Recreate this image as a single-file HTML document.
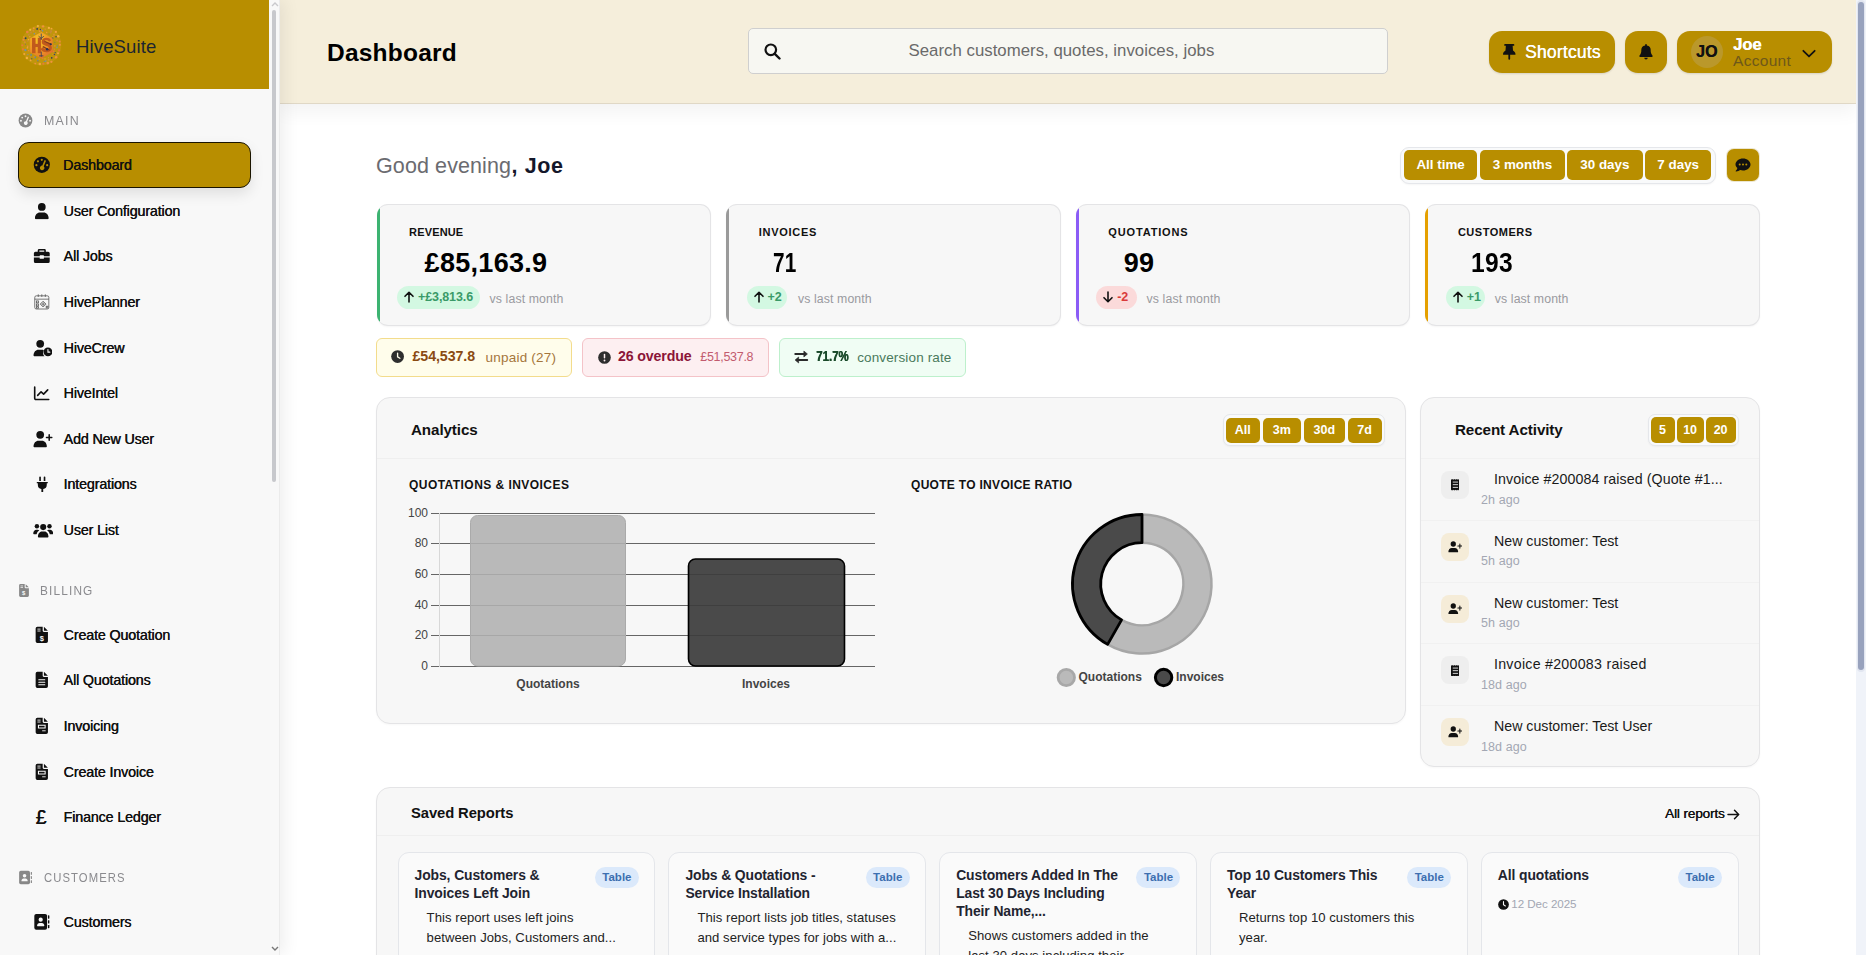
<!DOCTYPE html>
<html lang="en"><head><meta charset="utf-8"><title>Dashboard</title>
<style>
*{box-sizing:border-box;margin:0;padding:0}
html,body{width:1866px;height:955px;overflow:hidden;background:#fff;font-family:"Liberation Sans",sans-serif;color:#111}
.abs{position:absolute}
/* sidebar */
#side{position:absolute;left:0;top:0;width:280px;height:955px;background:#f8f8f8;border-right:1px solid #ebebeb;box-shadow:4px 0 16px rgba(0,0,0,.07)}
#brand{position:absolute;left:0;top:0;width:269px;height:89px;background:#b88e00}
#brand .nm{position:absolute;left:76px;top:35px;font-size:18.5px;line-height:24px;color:#1c2530;letter-spacing:.15px}
.sec{position:absolute;left:18px;height:16px;font-size:13px;line-height:16px;color:#8a8a8e;letter-spacing:1.25px}
.sec svg{position:absolute;left:0;top:0}
.sec span{position:absolute;top:1px}
.mi{position:absolute;left:18px;width:233px;height:46px;font-size:14.3px;line-height:46px;color:#111;font-weight:bold}
.mi span{position:absolute;left:45.5px;top:0;white-space:nowrap;letter-spacing:-.15px;font-weight:normal;text-shadow:.35px 0 0 #111}
.mi svg{position:absolute;left:15.2px;top:14.2px;width:17.6px;height:17.6px}
.mi.act{background:#b88e00;border:1.5px solid #1a1400;border-radius:11px;box-shadow:0 6px 14px rgba(0,0,0,.10)}
.mi.act svg{left:13.7px;top:12.7px}
.mi.act span{left:44px;top:-1.5px}
#sscroll{position:absolute;left:270px;top:0;width:9px;height:955px;background:#f8f8f8}
#sscroll i{position:absolute;left:2.2px;top:10px;width:3.8px;height:471.5px;border-radius:2px;background:#c7c8cc}
/* header */
#hdr{position:absolute;left:280px;top:0;width:1576px;height:104px;background:#f5eedb;border-bottom:1px solid #e0d8c6;box-shadow:0 8px 18px rgba(0,0,0,.05)}
#hdr h1{position:absolute;left:47px;top:35.5px;font-size:24.5px;line-height:34px;font-weight:bold;color:#000;letter-spacing:.22px}
#search{position:absolute;left:468px;top:28px;width:640px;height:46px;background:#f7f7f2;border:1px solid #cfcfcf;border-radius:5px}
#search span{position:absolute;left:159.5px;top:0;white-space:nowrap;font-size:16.8px;line-height:43.5px;color:#6a6a6a;letter-spacing:.02px}
.gb{position:absolute;top:31px;height:42px;background:#b88e00;border-radius:13px;box-shadow:0 1px 2px rgba(0,0,0,.12)}

/* header buttons */
#hdr .gb{top:31px}
.gb .t{position:absolute;white-space:nowrap}
/* main */
#main{position:absolute;left:280px;top:104px;width:1576px;height:851px;background:#fff;overflow:hidden}
#greet{position:absolute;left:96px;top:47px;font-size:21.5px;line-height:30px;color:#6b6b70;white-space:nowrap;letter-spacing:.1px}
#greet b{color:#14172a;font-weight:bold;letter-spacing:.6px;margin-left:.5px}
.grp{position:absolute;border:1px solid #e5e7eb;border-radius:9px;background:#f9fafb;box-shadow:0 1px 2px rgba(0,0,0,.04)}
.grp a{position:absolute;top:2px;background:#b88e00;color:#fff;font-weight:bold;text-align:center;border-radius:5px;white-space:nowrap}
/* stats */
.stat{position:absolute;top:100px;width:334.6px;height:122px;background:#f7f7f7;border:1px solid #e4e4e6;border-left:0;border-radius:11px;overflow:hidden;box-shadow:0 1px 2px rgba(0,0,0,.04)}

.stat:before{content:"";position:absolute;left:0;top:0;bottom:0;width:3px;background:var(--c)}
.stat .l{position:absolute;left:32.5px;top:19px;font-size:11px;line-height:16px;font-weight:bold;letter-spacing:.15px;color:#111}
.stat .v{position:absolute;left:48px;top:38px;font-size:27px;line-height:40px;font-weight:bold;color:#000;letter-spacing:.3px}
.stat .p{position:absolute;left:20.4px;top:81px;height:23px;border-radius:12px;font-size:12.5px;line-height:23px;font-weight:bold;padding:0 0 0 21px;white-space:nowrap;letter-spacing:-.1px;overflow:hidden}
.stat .p svg{position:absolute;left:7px;top:5px}
.stat .p.up{background:#d3f8e2;color:#3a9a68}
.stat .p.dn{background:#fbdada;color:#d93a3a}
.stat .m{position:absolute;top:85px;font-size:12.3px;line-height:18px;color:#9a9aa0;white-space:nowrap;letter-spacing:.1px}
/* alerts */
.al{position:absolute;top:234px;height:39px;border:1px solid;border-radius:6px;font-size:13.5px;line-height:35px;white-space:nowrap}
.al svg{position:absolute;left:14px;top:11px}
.al b{position:absolute;top:0;font-weight:bold;font-size:14.2px}
.al span{position:absolute;top:1px}
/* cards */
.card{position:absolute;background:#f7f7f7;border:1px solid #e4e4e6;border-radius:14px;box-shadow:0 1px 2px rgba(0,0,0,.03)}
.card .hd{position:absolute;left:0;right:0;top:0;height:61px;border-bottom:1px solid #efefef}
.card h2{position:absolute;top:22px;font-size:15.2px;line-height:20px;font-weight:bold;color:#111;letter-spacing:-.1px;white-space:nowrap}
.sub{position:absolute;font-size:12px;line-height:16px;font-weight:bold;letter-spacing:.3px;color:#111;white-space:nowrap}

.ax{font-family:"Liberation Sans",sans-serif;font-size:12px;fill:#444}
.ra{position:absolute;left:0;right:0;height:62px;border-top:1px solid #f1f1f1}
.ra .ic{position:absolute;left:20px;top:12px;width:28px;height:28px;border-radius:8px}
.ra .ic svg{position:absolute}
.ra .tx{position:absolute;left:73px;top:10px;font-size:14.2px;line-height:20px;color:#1a1a1a;white-space:nowrap;letter-spacing:0}
.ra .tm{position:absolute;left:60px;top:32.5px;font-size:12.5px;line-height:16px;color:#a3a7b3;white-space:nowrap;letter-spacing:.1px}
.rep{position:absolute;top:64px;width:257.8px;height:200px;background:#fafafa;border:1px solid #e4e6ea;border-radius:11px}
.rep h3{position:absolute;left:16px;top:13.7px;width:180px;font-size:13.9px;line-height:17.9px;font-weight:bold;color:#1f2430;letter-spacing:-.1px;white-space:nowrap}
.rep .tag{position:absolute;left:196.3px;top:14px;width:44px;height:21px;border-radius:11px;background:#dbe9fb;color:#3d6fb0;font-size:11.5px;line-height:21px;font-weight:bold;text-align:center}
.rep p{position:absolute;left:28px;width:215px;font-size:13.1px;line-height:20px;color:#222;white-space:nowrap;letter-spacing:.05px}
/* page scrollbar */
#pscroll{position:absolute;left:1856px;top:0;width:10px;height:955px;background:#f0f3f9}
#pscroll i{position:absolute;left:1px;top:0;width:8px;height:672px;border-radius:5px;background:#e2e6f0}
#pscroll b{position:absolute;left:2px;top:2px;width:6px;height:668px;border-radius:3px;background:#98a2bd}
</style></head><body>

<svg width="0" height="0" style="position:absolute">
<defs>
<symbol id="i-gauge" viewBox="0 0 20 20"><circle cx="10" cy="10" r="9.2" fill="currentColor"/><g fill="var(--bg)"><circle cx="10" cy="4.3" r="1.25"/><circle cx="5.6" cy="6.1" r="1.25"/><circle cx="3.9" cy="10.4" r="1.25"/><circle cx="16.1" cy="10.4" r="1.25"/><path d="M13.2 4.6l1.6.7-2.6 6.3a2.6 2.6 0 1 1-1.6-.7z"/></g></symbol>
<symbol id="i-user" viewBox="0 0 20 20"><circle cx="10" cy="5.6" r="4.4" fill="currentColor"/><path d="M2.2 18.6c0-4 2.6-6.6 5.6-6.6h4.4c3 0 5.6 2.600 5.600 6.600q0 .9-.9.900H3.100q-.9 0-.9-.9z" fill="currentColor"/></symbol>
<symbol id="i-brief" viewBox="0 0 20 20"><path fill="currentColor" d="M7 2.200h6a1.600 1.600 0 0 1 1.600 1.600V5.400h2.600A1.800 1.800 0 0 1 19 7.200v3.300H12.400v-.6a.6.6 0 0 0-.6-.6H8.200a.6.6 0 0 0-.6.6v.6H1V7.200A1.800 1.800 0 0 1 2.800 5.400H5.400V3.800A1.600 1.600 0 0 1 7 2.200zm.2 3.200h5.600V4H7.200zM1 11.900h6.600v.8a.6.600 0 0 0 .6.600h3.600a.6.600 0 0 0 .6-.6v-.8H19v4.500a1.800 1.800 0 0 1-1.800 1.800H2.800A1.800 1.800 0 0 1 1 16.400z"/></symbol>
<symbol id="i-plan" viewBox="0 0 20 20"><g fill="none" stroke="#555" stroke-width=".9"><rect x="2" y="3.200" width="16" height="15" rx="1.800"/><path d="M2 7h16M6 1.500v3M14 1.500v3M10 1.500v3"/><rect x="4" y="9" width="2.200" height="2.200"/><rect x="4" y="12.500" width="2.200" height="2.200"/><rect x="4" y="15.600" width="2.200" height="1.600"/><path d="M11.500 9.300l3.300 3.300-3.300 3.300-3.300-3.300zM11.500 10.500v4.200M9.400 12.600h4.200"/><rect x="15" y="15" width="2" height="2"/></g></symbol>
<symbol id="i-uclock" viewBox="0 0 22 20"><circle cx="8" cy="5.300" r="4.300" fill="currentColor"/><path fill="currentColor" d="M.6 18.400c0-3.900 2.500-6.500 5.400-6.500h4c.7 0 1.400.2 2 .5a6 6 0 0 0 .8 6.900H1.500q-.9 0-.9-.9z"/><circle cx="16.600" cy="14.400" r="4.900" fill="currentColor"/><path d="M16.600 11.700v2.900h2.100" fill="none" stroke="var(--bg)" stroke-width="1.200" stroke-linecap="round"/></symbol>
<symbol id="i-chart" viewBox="0 0 20 20"><path d="M2 2.500v13.200a1.300 1.300 0 0 0 1.300 1.300H18.500" fill="none" stroke="currentColor" stroke-width="1.900" stroke-linecap="round"/><path d="M5.500 12.200l4-4.200 3 2.700 4.800-5" fill="none" stroke="currentColor" stroke-width="1.900" stroke-linecap="round" stroke-linejoin="round"/></symbol>
<symbol id="i-uplus" viewBox="0 0 22 20"><circle cx="8" cy="5.300" r="4.300" fill="currentColor"/><path fill="currentColor" d="M.6 18.400c0-3.900 2.500-6.500 5.400-6.500h4c2.900 0 5.400 2.600 5.400 6.500q0 .9-.9.900H1.500q-.9 0-.9-.9z"/><path d="M18 5.300v6M15 8.300h6" stroke="currentColor" stroke-width="1.700" stroke-linecap="round"/></symbol>
<symbol id="i-plug" viewBox="0 0 20 20"><path fill="currentColor" d="M6.300 1.600a1 1 0 0 1 2 0V6h-2zM11.700 1.600a1 1 0 0 1 2 0V6h-2zM4 7.200h12a.8.800 0 0 1 0 1.600h-.6v1.700a5.400 5.400 0 0 1-4.300 5.300v3a1.100 1.100 0 0 1-2.200 0v-3a5.400 5.400 0 0 1-4.300-5.300V8.800H4a.8.800 0 0 1 0-1.600z"/></symbol>
<symbol id="i-users" viewBox="0 0 24 20"><circle cx="12" cy="6" r="3.600" fill="currentColor"/><circle cx="4.600" cy="5" r="2.600" fill="currentColor"/><circle cx="19.400" cy="5" r="2.600" fill="currentColor"/><path fill="currentColor" d="M5.800 17.400c0-3.400 2-6.200 4.600-6.200h3.200c2.600 0 4.600 2.800 4.600 6.200q0 .9-.9.900H6.700q-.9 0-.9-.9zM.3 13.600c0-2.600 1.500-4.600 3.500-4.600h1.800c.7 0 1.300.2 1.800.6a7 7 0 0 0-3.200 4.900H1.100q-.8 0-.8-.9zM23.700 13.600c0-2.600-1.500-4.600-3.500-4.600h-1.800c-.7 0-1.300.2-1.800.6a7 7 0 0 1 3.200 4.900h3.100q.8 0 .8-.9z"/></symbol>
<symbol id="i-fdollar" viewBox="0 0 20 20"><path fill="currentColor" d="M5 .8h6v4.700a1.300 1.300 0 0 0 1.300 1.300H17v10.400a2 2 0 0 1-2 2H5a2 2 0 0 1-2-2V2.800a2 2 0 0 1 2-2zM12.400.9L16.900 5.500H12.400z"/><g fill="var(--bg)"><rect x="5" y="3" width="3.600" height="1"/><rect x="5" y="5.200" width="3.600" height="1"/></g><text x="10" y="17" font-family="Liberation Sans" font-size="8.500" font-weight="bold" text-anchor="middle" fill="var(--bg)">$</text></symbol>
<symbol id="i-flines" viewBox="0 0 20 20"><path fill="currentColor" d="M5 .8h6v4.700a1.300 1.300 0 0 0 1.300 1.300H17v10.400a2 2 0 0 1-2 2H5a2 2 0 0 1-2-2V2.800a2 2 0 0 1 2-2zM12.400.9L16.900 5.500H12.400z"/><g fill="var(--bg)"><rect x="6" y="9.400" width="8" height="1.200" rx=".6"/><rect x="6" y="12.200" width="8" height="1.200" rx=".6"/><rect x="6" y="15" width="8" height="1.200" rx=".6"/></g></symbol>
<symbol id="i-finv" viewBox="0 0 20 20"><path fill="currentColor" d="M5 .8h6v4.700a1.300 1.300 0 0 0 1.300 1.300H17v10.400a2 2 0 0 1-2 2H5a2 2 0 0 1-2-2V2.800a2 2 0 0 1 2-2zM12.400.9L16.900 5.500H12.400z"/><g fill="var(--bg)"><rect x="5" y="3" width="3.600" height="1"/><rect x="5" y="5.200" width="3.600" height="1"/><path d="M5.600 8.800h8.800v4.400H5.600zm1.200 1.200v2h6.400v-2z"/><rect x="10.400" y="15.200" width="4" height="1"/></g></symbol>
<symbol id="i-abook" viewBox="0 0 20 20"><rect x="1.500" y="1" width="14.500" height="18" rx="2.200" fill="currentColor"/><g fill="currentColor"><rect x="17" y="2.600" width="1.600" height="3.800" rx=".5"/><rect x="17" y="8.100" width="1.600" height="3.800" rx=".5"/><rect x="17" y="13.600" width="1.600" height="3.800" rx=".5"/></g><g fill="var(--bg)"><circle cx="8.750" cy="7.600" r="2.400"/><path d="M4.600 14.600c0-1.900 1.300-3.200 2.900-3.200H10c1.600 0 2.900 1.300 2.900 3.200q0 .5-.5.500H5.100q-.5 0-.5-.5z"/></g></symbol>
</defs></svg>
<div id="main">
<div id="greet">Good evening<b>, Joe</b></div>
<div class="grp" style="left:1120px;top:42.500px;width:315.500px;height:37px">
<a style="left:3.200px;width:72.800px;height:30px;top:2.500px;font-size:13.400px;line-height:30px">All time</a>
<a style="left:79.300px;width:84.400px;height:30px;top:2.500px;font-size:13.400px;line-height:30px">3 months</a>
<a style="left:166px;width:75.700px;height:30px;top:2.500px;font-size:13.400px;line-height:30px">30 days</a>
<a style="left:244px;width:66.400px;height:30px;top:2.500px;font-size:13.400px;line-height:30px">7 days</a>
</div>
<div class="abs" style="left:1447px;top:45px;width:32px;height:32px;border-radius:7px;background:#b88e00;box-shadow:0 0 0 1px #ece6d0"><svg style="position:absolute;left:8px;top:9px" width="16" height="14" viewBox="0 0 16 14"><path fill="#111" d="M8 .5c4.100 0 7.500 2.700 7.500 6s-3.400 6-7.500 6c-1 0-2-.2-2.900-.5-.9.700-2.300 1.500-4 1.500a.4.400 0 0 1-.3-.7c.8-.8 1.400-1.800 1.600-2.800C1.200 9 .5 7.800.5 6.500c0-3.300 3.400-6 7.500-6z"/><g fill="#b88e00"><circle cx="4.700" cy="6.500" r="1"/><circle cx="8" cy="6.500" r="1"/><circle cx="11.300" cy="6.500" r="1"/></g></svg></div>
<div class="stat" style="left:96.6px;--c:#3cb371"><div class="l" style="letter-spacing:.15px">REVENUE</div><div class="v" style="">£85,163.9</div><div class="p up" style="width:82.6px"><svg width="10" height="12" viewBox="0 0 10 12"><path d="M5 11V1.500M1 5.300l4-4 4 4" fill="none" stroke="#111" stroke-width="1.600" stroke-linecap="round" stroke-linejoin="round"/></svg>+£3,813.6</div><div class="m" style="left:113.0px">vs last month</div></div>
<div class="stat" style="left:446.2px;--c:#9a9a9a"><div class="l" style="letter-spacing:.72px">INVOICES</div><div class="v" style="transform:scaleX(.77);transform-origin:0 50%;margin-left:-1.500px">71</div><div class="p up" style="width:40.6px"><svg width="10" height="12" viewBox="0 0 10 12"><path d="M5 11V1.500M1 5.300l4-4 4 4" fill="none" stroke="#111" stroke-width="1.600" stroke-linecap="round" stroke-linejoin="round"/></svg>+2</div><div class="m" style="left:71.8px">vs last month</div></div>
<div class="stat" style="left:795.8px;--c:#8b5cf6"><div class="l" style="letter-spacing:.85px">QUOTATIONS</div><div class="v" style="">99</div><div class="p dn" style="width:40.8px"><svg width="10" height="12" viewBox="0 0 10 12"><path d="M5 1v9.500M1 6.700l4 4 4-4" fill="none" stroke="#111" stroke-width="1.600" stroke-linecap="round" stroke-linejoin="round"/></svg>-2</div><div class="m" style="left:70.8px">vs last month</div></div>
<div class="stat" style="left:1145.4px;--c:#e5a000"><div class="l" style="letter-spacing:.52px">CUSTOMERS</div><div class="v" style="transform:scaleX(.91);transform-origin:0 50%;margin-left:-2.300px">193</div><div class="p up" style="width:38.8px"><svg width="10" height="12" viewBox="0 0 10 12"><path d="M5 11V1.500M1 5.300l4-4 4 4" fill="none" stroke="#111" stroke-width="1.600" stroke-linecap="round" stroke-linejoin="round"/></svg>+1</div><div class="m" style="left:69.4px">vs last month</div></div>

<div class="al" style="left:96px;width:196px;background:#fffdeb;border-color:#f3dc8c"><svg width="13.200" height="13.200" viewBox="0 0 14 14" style="left:14.300px;top:11.300px"><circle cx="7" cy="7" r="6.800" fill="#2e2e2e"/><path d="M7 3.300v4l2.400 1.500" fill="none" stroke="#fffdeb" stroke-width="1.400" stroke-linecap="round"/></svg><b style="left:35.500px;color:#8a4a12;letter-spacing:-.07px">£54,537.8</b><span style="left:108.500px;color:#a5763c;letter-spacing:.22px">unpaid (27)</span></div>
<div class="al" style="left:302px;width:187px;background:#fdeff1;border-color:#f4c3c8"><svg width="13" height="13" viewBox="0 0 14 14" style="left:14.500px;top:11.500px"><circle cx="7" cy="7" r="6.800" fill="#2e2e2e"/><rect x="6.200" y="3" width="1.600" height="5" rx=".8" fill="#fdeff1"/><circle cx="7" cy="10.200" r="1" fill="#fdeff1"/></svg><b style="left:35px;color:#8b1538;letter-spacing:-.14px">26 overdue</b><span style="left:117.300px;color:#c25b6e;font-size:12.500px;letter-spacing:-.3px">£51,537.8</span></div>
<div class="al" style="left:499px;width:187px;background:#f0fdf4;border-color:#bdf0cc"><svg width="14.500" height="14" viewBox="0 0 14 14"><path d="M1 4h10M13 10H3" fill="none" stroke="#2a2a2a" stroke-width="1.900" stroke-linecap="round"/><path d="M9.600 1v6l3.600-3zM4.400 7v6L.8 10z" fill="#2a2a2a" stroke="#2a2a2a" stroke-width=".6" stroke-linejoin="round"/></svg><b style="left:35.500px;color:#1a4a2a;transform:scaleX(.81);transform-origin:0 50%;text-shadow:.5px 0 0 #1a4a2a">71.7%</b><span style="left:77.200px;color:#4a7a5c;letter-spacing:.13px">conversion rate</span></div>

<div class="card" style="left:96px;top:293px;width:1030px;height:327px">
<div class="hd"></div><h2 style="left:34px">Analytics</h2>
<div class="grp" style="left:845.600px;top:16px;width:162px;height:32px;border-radius:7px">
<a style="left:2px;width:34.500px;height:25px;top:2.500px;font-size:12.500px;line-height:25px">All</a>
<a style="left:39px;width:38.500px;height:25px;top:2.500px;font-size:12.500px;line-height:25px">3m</a>
<a style="left:80px;width:41.500px;height:25px;top:2.500px;font-size:12.500px;line-height:25px">30d</a>
<a style="left:124px;width:34px;height:25px;top:2.500px;font-size:12.500px;line-height:25px">7d</a>
</div>
<div class="sub" style="left:32px;top:79px;letter-spacing:.45px">QUOTATIONS &amp; INVOICES</div>
<div class="sub" style="left:534px;top:79px">QUOTE TO INVOICE RATIO</div>
<svg class="abs" style="left:24px;top:100px" width="490" height="200" viewBox="0 0 490 200">
<g stroke="#666" stroke-width="1" shape-rendering="crispEdges">
<line x1="30" x2="474" y1="15.500" y2="15.500"/><line x1="30" x2="474" y1="45.500" y2="45.500"/><line x1="30" x2="474" y1="76.500" y2="76.500"/><line x1="30" x2="474" y1="107.500" y2="107.500"/><line x1="30" x2="474" y1="137.500" y2="137.500"/><line x1="30" x2="474" y1="168.500" y2="168.500"/>
<line x1="38.500" x2="38.500" y1="15" y2="169" stroke="#d8d8d8"/>
</g>
<rect x="69.500" y="17.500" width="155" height="150.500" rx="7" fill="rgba(176,176,176,.88)" stroke="#aaa" stroke-width="1"/>
<rect x="287.500" y="61" width="156" height="107" rx="7" fill="rgba(60,60,60,.93)" stroke="#000" stroke-width="1.600"/>
<g class="ax" text-anchor="end"><text x="27" y="19">100</text><text x="27" y="49.400">80</text><text x="27" y="80">60</text><text x="27" y="111">40</text><text x="27" y="141">20</text><text x="27" y="172">0</text></g>
<g class="ax" text-anchor="middle" font-weight="bold"><text x="147" y="190">Quotations</text><text x="365" y="190">Invoices</text></g>
</svg>
<svg class="abs" style="left:679px;top:100px" width="172" height="172" viewBox="0 0 172 172">
<path d="M86 16.5A69.5 69.5 0 1 1 51.62 146.40L65.57 121.89A41.3 41.3 0 1 0 86 44.7Z" fill="#bababa" stroke="#a6a6a6" stroke-width="2.500" stroke-linejoin="round"/>
<path d="M51.62 146.40A69.5 69.5 0 0 1 86 16.5L86 44.7A41.3 41.3 0 0 0 65.57 121.89Z" fill="#4a4a4a" stroke="#000" stroke-width="2.800" stroke-linejoin="round"/>
</svg>
<svg class="abs" style="left:669px;top:265.500px" width="200" height="26" viewBox="0 0 200 26">
<circle cx="20.300" cy="13.500" r="8.200" fill="#bababa" stroke="#a8a8a8" stroke-width="2.800"/>
<circle cx="117.600" cy="13.500" r="8.200" fill="#4a4a4a" stroke="#000" stroke-width="3"/>
<g class="ax" font-weight="bold"><text x="32.500" y="17">Quotations</text><text x="130" y="17">Invoices</text></g>
</svg>
</div>

<div class="card" style="left:1140px;top:293px;width:340px;height:370px;overflow:hidden">
<h2 style="left:34px">Recent Activity</h2>
<div class="grp" style="left:227.300px;top:15.500px;width:91px;height:32px;border-radius:7px">
<a style="left:1.300px;width:24px;height:26px;top:2px;font-size:12.500px;line-height:26px">5</a>
<a style="left:27.300px;width:27px;height:26px;top:2px;font-size:12.500px;line-height:26px">10</a>
<a style="left:56.300px;width:30px;height:26px;top:2px;font-size:12.500px;line-height:26px">20</a>
</div>
<div class="ra" style="top:60px"><div class="ic" style="background:#eeeeee"><svg style="left:9.600px;top:8.300px" width="8.800" height="11.400" viewBox="0 0 10 13" preserveAspectRatio="none"><path fill="#111" d="M0 0l1 .8 1-.8 1 .8 1-.8 1 .8 1-.8 1 .8 1-.8 1 .8 1-.8v13l-1-.8-1 .8-1-.8-1 .8-1-.8-1 .8-1-.8-1 .8-1-.8-1 .8z"/><g fill="#eeeeee"><rect x="2" y="3" width="6" height="1"/><rect x="2" y="6" width="6" height="1"/><rect x="2" y="9" width="6" height="1"/></g></svg></div><div class="tx" style="letter-spacing:.09px">Invoice #200084 raised (Quote #1...</div><div class="tm">2h ago</div></div>
<div class="ra" style="top:121.75px"><div class="ic" style="background:#f5ecd8"><svg style="left:6.800px;top:8.300px" width="14.500" height="11.500" viewBox="0 0 22 17" preserveAspectRatio="none"><circle cx="8" cy="4.500" r="4" fill="#111"/><path fill="#111" d="M.6 15.800c0-3.400 2.300-5.600 5-5.600h4.800c2.700 0 5 2.200 5 5.600q0 .8-.8.800H1.400q-.8 0-.8-.8z"/><path d="M18 4.500v6M15 7.500h6" stroke="#111" stroke-width="1.600" stroke-linecap="round"/></svg></div><div class="tx">New customer: Test</div><div class="tm">5h ago</div></div>
<div class="ra" style="top:183.5px"><div class="ic" style="background:#f5ecd8"><svg style="left:6.800px;top:8.300px" width="14.500" height="11.500" viewBox="0 0 22 17" preserveAspectRatio="none"><circle cx="8" cy="4.500" r="4" fill="#111"/><path fill="#111" d="M.6 15.800c0-3.400 2.300-5.600 5-5.600h4.800c2.700 0 5 2.200 5 5.600q0 .8-.8.800H1.400q-.8 0-.8-.8z"/><path d="M18 4.500v6M15 7.500h6" stroke="#111" stroke-width="1.600" stroke-linecap="round"/></svg></div><div class="tx">New customer: Test</div><div class="tm">5h ago</div></div>
<div class="ra" style="top:245.25px"><div class="ic" style="background:#eeeeee"><svg style="left:9.600px;top:8.300px" width="8.800" height="11.400" viewBox="0 0 10 13" preserveAspectRatio="none"><path fill="#111" d="M0 0l1 .8 1-.8 1 .8 1-.8 1 .8 1-.8 1 .8 1-.8 1 .8 1-.8v13l-1-.8-1 .8-1-.8-1 .8-1-.8-1 .8-1-.8-1 .8-1-.8-1 .8z"/><g fill="#eeeeee"><rect x="2" y="3" width="6" height="1"/><rect x="2" y="6" width="6" height="1"/><rect x="2" y="9" width="6" height="1"/></g></svg></div><div class="tx" style="letter-spacing:.27px">Invoice #200083 raised</div><div class="tm">18d ago</div></div>
<div class="ra" style="top:307px"><div class="ic" style="background:#f5ecd8"><svg style="left:6.800px;top:8.300px" width="14.500" height="11.500" viewBox="0 0 22 17" preserveAspectRatio="none"><circle cx="8" cy="4.500" r="4" fill="#111"/><path fill="#111" d="M.6 15.800c0-3.400 2.300-5.600 5-5.600h4.800c2.700 0 5 2.200 5 5.600q0 .8-.8.800H1.400q-.8 0-.8-.8z"/><path d="M18 4.500v6M15 7.500h6" stroke="#111" stroke-width="1.600" stroke-linecap="round"/></svg></div><div class="tx">New customer: Test User</div><div class="tm">18d ago</div></div>
</div>

<div class="card" style="left:96px;top:683px;width:1384px;height:300px;overflow:hidden">
<div class="hd" style="height:48px"></div><h2 style="left:34px;top:15px;font-size:14.800px">Saved Reports</h2>
<div class="abs" style="left:1288px;top:17px;font-size:13.500px;line-height:18px;color:#111;white-space:nowrap;letter-spacing:-.1px;text-shadow:.3px 0 0 #111">All reports</div>
<svg class="abs" style="left:1350px;top:21px" width="13" height="11" viewBox="0 0 13 11"><path d="M1 5.500h10.500M7.500 1.300l4.200 4.200-4.200 4.200" fill="none" stroke="#111" stroke-width="1.500" stroke-linecap="round" stroke-linejoin="round"/></svg>
<div class="rep" style="left:20.6px"><h3>Jobs, Customers &amp;<br>Invoices Left Join</h3><div class="tag">Table</div><p style="top:55px">This report uses left joins</p><p style="top:75px">between Jobs, Customers and...</p></div>
<div class="rep" style="left:291.4px"><h3>Jobs &amp; Quotations -<br>Service Installation</h3><div class="tag">Table</div><p style="top:55px">This report lists job titles, statuses</p><p style="top:75px">and service types for jobs with a...</p></div>
<div class="rep" style="left:562.2px"><h3>Customers Added In The<br>Last 30 Days Including<br>Their Name,...</h3><div class="tag">Table</div><p style="top:73px">Shows customers added in the</p><p style="top:93px">last 30 days including their</p></div>
<div class="rep" style="left:833px"><h3>Top 10 Customers This<br>Year</h3><div class="tag">Table</div><p style="top:55px">Returns top 10 customers this</p><p style="top:75px">year.</p></div>
<div class="rep" style="left:1103.8px"><h3>All quotations</h3><div class="tag">Table</div><svg class="abs" style="left:16.500px;top:45.500px" width="11" height="11" viewBox="0 0 14 14"><circle cx="7" cy="7" r="6.800" fill="#111"/><path d="M7 3.300v4l2.400 1.500" fill="none" stroke="#fafafa" stroke-width="1.400" stroke-linecap="round"/></svg><div class="abs" style="left:29.500px;top:43px;font-size:11.600px;line-height:16px;color:#a3a7b3;white-space:nowrap;letter-spacing:-.05px">12 Dec 2025</div></div>
</div>
</div>
<div id="hdr">
<h1>Dashboard</h1>
<div id="search"><svg style="position:absolute;left:15px;top:14px" width="17" height="17" viewBox="0 0 17 17"><circle cx="6.800" cy="6.800" r="5.300" fill="none" stroke="#111" stroke-width="2.200"/><path d="M10.800 10.800l4.700 4.700" stroke="#111" stroke-width="2.400" stroke-linecap="round"/></svg><span>Search customers, quotes, invoices, jobs</span></div>

<div class="gb" style="left:1209px;width:126px;top:31px"><svg style="position:absolute;left:14px;top:12px" width="12.500" height="17" viewBox="0 0 14 18" preserveAspectRatio="none"><path fill="#111" d="M2.300 1h9.400a1 1 0 0 1 0 2h-.9l.4 5c1.500.8 2.500 2 2.800 3.600a.8.800 0 0 1-.8.900H8v4.300a1 1 0 0 1-2 0V12.500H.8a.8.800 0 0 1-.8-.9c.3-1.600 1.300-2.800 2.800-3.600l.4-5H2.300a1 1 0 0 1 0-2z"/></svg><span class="t" style="left:36px;top:10px;font-size:17.500px;line-height:22px;color:#fff;letter-spacing:.2px;text-shadow:.3px 0 0 #fff">Shortcuts</span></div>
<div class="gb" style="left:1345px;width:42px;top:31px"><svg style="position:absolute;left:14px;top:13px" width="14" height="16" viewBox="0 0 16 18" preserveAspectRatio="none"><path fill="#111" d="M8 0a1 1 0 0 1 1 1v.6A5.400 5.400 0 0 1 13.400 7v1c0 1.600.5 3.200 1.500 4.400l.5.600a.9.900 0 0 1-.7 1.500H1.300a.9.900 0 0 1-.7-1.500l.5-.6C2.100 11.200 2.600 9.600 2.600 8V7A5.400 5.400 0 0 1 7 1.600V1a1 1 0 0 1 1-1zM6 15.500h4a2 2 0 0 1-4 0z"/></svg></div>
<div class="gb" style="left:1397px;width:155px;top:31px"><i style="position:absolute;left:14px;top:5px;width:32px;height:32px;border-radius:50%;background:#ba982b"></i><span class="t" style="left:19px;top:11px;font-size:16px;line-height:20px;font-weight:bold;color:#111;letter-spacing:0;text-shadow:.3px 0 0 #111">JO</span><span class="t" style="left:56px;top:3px;font-size:16.500px;line-height:20px;font-weight:bold;color:#fff;text-shadow:.4px 0 0 #fff">Joe</span><span class="t" style="left:56px;top:21px;font-size:15.500px;line-height:18px;color:#6e581a;letter-spacing:.3px">Account</span><svg style="position:absolute;left:125px;top:17.500px" width="14" height="10" viewBox="0 0 16 11"><path d="M1.500 1.800L8 8.300l6.500-6.500" fill="none" stroke="#111" stroke-width="2" stroke-linecap="round" stroke-linejoin="round"/></svg></div>
</div>
<div id="side">
<div id="brand"><svg style="position:absolute;left:19px;top:23px" width="44.500" height="44.500" viewBox="0 0 42 42">
<defs><radialGradient id="lg" cx="38%" cy="30%" r="75%"><stop offset="0" stop-color="#f8c526"/><stop offset=".55" stop-color="#f09a24"/><stop offset="1" stop-color="#e26f2c"/></radialGradient>
<filter id="lb" x="-10%" y="-10%" width="120%" height="120%"><feGaussianBlur stdDeviation=".35"/></filter></defs>
<g filter="url(#lb)">
<circle cx="21" cy="21" r="19" fill="#c99a1a" opacity=".55"/>
<circle cx="38.61" cy="20.63" r="1.09" fill="#f0923e"/><circle cx="37.85" cy="25.85" r="1.06" fill="#e9783a"/><circle cx="36.78" cy="28.61" r="0.99" fill="#f3a53a"/><circle cx="35.04" cy="32.26" r="1.17" fill="#f0923e"/><circle cx="30.56" cy="36.58" r="1.06" fill="#f0923e"/><circle cx="27.21" cy="37.85" r="1.24" fill="#f0923e"/><circle cx="23.00" cy="38.47" r="0.99" fill="#e9783a"/><circle cx="19.66" cy="38.78" r="1.17" fill="#f3a53a"/><circle cx="15.36" cy="38.30" r="0.88" fill="#f0923e"/><circle cx="10.98" cy="35.34" r="0.83" fill="#f3a53a"/><circle cx="7.42" cy="33.04" r="1.15" fill="#f5b040"/><circle cx="4.95" cy="29.22" r="0.93" fill="#f3a53a"/><circle cx="3.68" cy="24.83" r="1.06" fill="#e9783a"/><circle cx="3.12" cy="21.01" r="1.00" fill="#e9783a"/><circle cx="4.22" cy="15.82" r="0.99" fill="#ee8440"/><circle cx="4.65" cy="13.27" r="0.82" fill="#f0923e"/><circle cx="7.77" cy="8.50" r="1.19" fill="#ee8440"/><circle cx="10.56" cy="6.47" r="1.02" fill="#f5b040"/><circle cx="13.94" cy="4.95" r="0.92" fill="#f0923e"/><circle cx="17.83" cy="2.89" r="1.09" fill="#f5b040"/><circle cx="22.70" cy="3.14" r="1.10" fill="#f0923e"/><circle cx="28.22" cy="4.62" r="1.07" fill="#f5b040"/><circle cx="30.68" cy="5.26" r="0.86" fill="#f3a53a"/><circle cx="34.83" cy="8.44" r="1.02" fill="#f3a53a"/><circle cx="37.04" cy="12.46" r="1.20" fill="#f5b040"/><circle cx="38.44" cy="17.50" r="0.99" fill="#ee8440"/><circle cx="36.20" cy="21.56" r="0.64" fill="#5b86ad"/><circle cx="35.81" cy="23.16" r="0.64" fill="#6f93b5"/><circle cx="34.17" cy="27.94" r="0.66" fill="#33466a"/><circle cx="33.43" cy="29.73" r="0.78" fill="#33466a"/><circle cx="30.88" cy="32.85" r="0.80" fill="#2c3c5e"/><circle cx="28.02" cy="34.63" r="0.90" fill="#d99030"/><circle cx="25.25" cy="35.90" r="0.71" fill="#6f93b5"/><circle cx="23.86" cy="36.35" r="0.57" fill="#5b86ad"/><circle cx="17.93" cy="35.99" r="0.59" fill="#8a7a4a"/><circle cx="17.75" cy="35.23" r="0.61" fill="#5b86ad"/><circle cx="12.03" cy="33.74" r="0.58" fill="#33466a"/><circle cx="10.82" cy="31.80" r="0.65" fill="#c98a3a"/><circle cx="8.39" cy="29.77" r="0.60" fill="#6f93b5"/><circle cx="6.43" cy="25.83" r="0.74" fill="#5b86ad"/><circle cx="5.82" cy="25.38" r="0.85" fill="#6f93b5"/><circle cx="6.17" cy="20.02" r="0.56" fill="#8a7a4a"/><circle cx="5.55" cy="18.16" r="0.92" fill="#d99030"/><circle cx="6.27" cy="14.34" r="0.90" fill="#2c3c5e"/><circle cx="9.17" cy="11.09" r="0.91" fill="#c98a3a"/><circle cx="11.30" cy="8.97" r="0.86" fill="#c98a3a"/><circle cx="13.58" cy="7.30" r="0.87" fill="#d99030"/><circle cx="17.17" cy="5.58" r="0.88" fill="#2c3c5e"/><circle cx="20.34" cy="6.09" r="0.75" fill="#2c3c5e"/><circle cx="21.15" cy="6.36" r="0.66" fill="#c98a3a"/><circle cx="24.90" cy="5.93" r="0.69" fill="#d99030"/><circle cx="30.28" cy="7.75" r="0.93" fill="#c98a3a"/><circle cx="29.92" cy="9.24" r="0.74" fill="#c98a3a"/><circle cx="33.06" cy="11.10" r="0.91" fill="#d99030"/><circle cx="34.94" cy="13.04" r="0.69" fill="#2c3c5e"/><circle cx="35.99" cy="16.49" r="0.91" fill="#d99030"/><circle cx="33.83" cy="21.54" r="0.81" fill="#d99030"/><circle cx="33.42" cy="24.84" r="0.78" fill="#e9783a"/><circle cx="32.71" cy="26.84" r="0.83" fill="#e9783a"/><circle cx="31.92" cy="29.42" r="0.51" fill="#ee8440"/><circle cx="27.78" cy="32.75" r="0.55" fill="#ee8440"/><circle cx="24.53" cy="33.92" r="0.62" fill="#f3a53a"/><circle cx="22.40" cy="33.55" r="0.78" fill="#e9783a"/><circle cx="19.01" cy="34.08" r="0.83" fill="#d99030"/><circle cx="15.30" cy="32.50" r="0.81" fill="#5b86ad"/><circle cx="14.18" cy="32.01" r="0.58" fill="#ee8440"/><circle cx="11.39" cy="30.13" r="0.79" fill="#5b86ad"/><circle cx="9.01" cy="26.09" r="0.66" fill="#ee8440"/><circle cx="7.99" cy="23.35" r="0.79" fill="#f3a53a"/><circle cx="8.25" cy="21.94" r="0.68" fill="#f0923e"/><circle cx="8.25" cy="17.10" r="0.77" fill="#c98a3a"/><circle cx="8.96" cy="15.66" r="0.75" fill="#f3a53a"/><circle cx="10.22" cy="13.02" r="0.69" fill="#f0923e"/><circle cx="14.38" cy="10.13" r="0.70" fill="#6f93b5"/><circle cx="15.79" cy="9.47" r="0.53" fill="#f0923e"/><circle cx="19.54" cy="7.57" r="0.82" fill="#f0923e"/><circle cx="22.18" cy="7.28" r="0.71" fill="#6f93b5"/><circle cx="26.13" cy="8.90" r="0.69" fill="#f0923e"/><circle cx="28.34" cy="10.40" r="0.68" fill="#8a7a4a"/><circle cx="31.96" cy="12.83" r="0.57" fill="#f0923e"/><circle cx="31.83" cy="14.27" r="0.65" fill="#33466a"/><circle cx="33.83" cy="18.30" r="0.57" fill="#8a7a4a"/>
<path d="M21 8.500l10.800 6.200v12.600L21 33.500 10.200 27.300V14.700z" fill="url(#lg)"/>
<g fill="#c25a1c"><rect x="12.300" y="14" width="3.300" height="14.500"/><rect x="17.700" y="14" width="3" height="14.500"/><rect x="12.300" y="19.700" width="8" height="3"/>
<path d="M30.300 16.200c-1-1.500-2.600-2.300-4.500-2.300-2.600 0-4.400 1.500-4.400 3.700 0 2 1.300 3 3.800 3.800l1.400.5c1.100.4 1.500.8 1.500 1.500 0 .9-.8 1.500-2.100 1.500-1.500 0-2.600-.7-3.400-2l-2.300 1.700c1.100 2 3.100 3.100 5.600 3.100 3 0 5.100-1.700 5.100-4.300 0-2.100-1.200-3.300-3.900-4.200l-1.300-.4c-1.100-.4-1.500-.7-1.500-1.300 0-.7.600-1.200 1.600-1.200 1.100 0 1.900.5 2.500 1.400z"/></g>
<path d="M21 10v6M18.500 12.500l2.500 2 2.500-2M21 27v5M19 31h4" stroke="#3a3f5a" stroke-width=".8" fill="none"/>
<path d="M24.500 17.500l5.500 2.500M23 22.500l5.500 3" stroke="#8a3a1a" stroke-width="1.300" stroke-linecap="round"/>
<circle cx="30" cy="20" r="1" fill="#2c3252"/><circle cx="26.500" cy="24.800" r="1.100" fill="#2c3252"/>
</g></svg><span class="nm">HiveSuite</span></div>
<div class="sec" style="top:112px;--bg:#f8f8f8"><svg width="15" height="15" style="color:#888;top:.5px"><use href="#i-gauge"/></svg><span style="left:26px;transform:scaleX(.955);transform-origin:0 50%">MAIN</span></div>
<div class="sec" style="top:582px;--bg:#f8f8f8"><svg width="14" height="15" style="color:#888;left:-1px;top:.5px"><use href="#i-fdollar"/></svg><span style="left:22.300px;transform:scaleX(.912);transform-origin:0 50%">BILLING</span></div>
<div class="sec" style="top:869px;--bg:#f8f8f8"><svg width="15" height="15" style="color:#888;top:.5px"><use href="#i-abook"/></svg><span style="left:26px;transform:scaleX(.868);transform-origin:0 50%">CUSTOMERS</span></div>
<div class="mi act" style="top:142px;--bg:#b88e00"><svg><use href="#i-gauge"/></svg><span>Dashboard</span></div>
<div class="mi " style="top:188px;--bg:#f8f8f8"><svg><use href="#i-user"/></svg><span>User Configuration</span></div>
<div class="mi " style="top:233px;--bg:#f8f8f8"><svg><use href="#i-brief"/></svg><span>All Jobs</span></div>
<div class="mi " style="top:279px;--bg:#f8f8f8"><svg><use href="#i-plan"/></svg><span>HivePlanner</span></div>
<div class="mi " style="top:325px;--bg:#f8f8f8"><svg style="width:19.800px;height:18px;left:14.600px;top:14px"><use href="#i-uclock"/></svg><span>HiveCrew</span></div>
<div class="mi " style="top:370px;--bg:#f8f8f8"><svg style="width:17px;height:17px;left:15.300px;top:14.700px"><use href="#i-chart"/></svg><span>HiveIntel</span></div>
<div class="mi " style="top:416px;--bg:#f8f8f8"><svg style="width:19.800px;height:18px;left:14.800px;top:14px"><use href="#i-uplus"/></svg><span>Add New User</span></div>
<div class="mi " style="top:461px;--bg:#f8f8f8"><svg style="width:16.600px;height:16.600px;left:15.700px;top:14.600px"><use href="#i-plug"/></svg><span>Integrations</span></div>
<div class="mi " style="top:507px;--bg:#f8f8f8"><svg style="width:20.400px;height:17px;left:14.600px;top:14.600px"><use href="#i-users"/></svg><span>User List</span></div>
<div class="mi " style="top:612px;--bg:#f8f8f8"><svg><use href="#i-fdollar"/></svg><span>Create Quotation</span></div>
<div class="mi " style="top:657px;--bg:#f8f8f8"><svg><use href="#i-flines"/></svg><span>All Quotations</span></div>
<div class="mi " style="top:703px;--bg:#f8f8f8"><svg><use href="#i-finv"/></svg><span>Invoicing</span></div>
<div class="mi " style="top:749px;--bg:#f8f8f8"><svg><use href="#i-finv"/></svg><span>Create Invoice</span></div>
<div class="mi " style="top:794px;--bg:#f8f8f8"><b style="position:absolute;left:17.500px;top:0;font-size:19.500px;font-weight:normal;text-shadow:.5px 0 0 #111">£</b><span>Finance Ledger</span></div>
<div class="mi " style="top:899px;--bg:#f8f8f8"><svg><use href="#i-abook"/></svg><span>Customers</span></div>
<div id="sscroll"><i></i><svg style="position:absolute;left:.500px;top:1px" width="8" height="6" viewBox="0 0 8 6"><path d="M1 5l3-3 3 3" fill="none" stroke="#c9c9cc" stroke-width="1.400"/></svg><svg style="position:absolute;left:.500px;top:946px" width="8" height="6" viewBox="0 0 8 6"><path d="M1 1l3 3 3-3" fill="none" stroke="#777" stroke-width="1.400"/></svg></div>
</div>
<div id="pscroll"><i></i><b></b></div>
</body></html>
